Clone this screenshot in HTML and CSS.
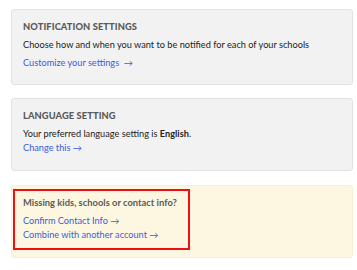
FILE: index.html
```html
<!DOCTYPE html>
<html lang="en">
<head>
    <meta charset="UTF-8">
    <meta name="viewport" content="width=device-width, initial-scale=1.0">
    <title>Settings</title>
    <link rel="stylesheet" href="styles.css">
</head>
<body>

    <div class="panel">
        <h2 class="panel-title">Notification Settings</h2>
        <p class="panel-text">Choose how and when you want to be notified for each of your schools</p>
        <a class="link" href="#">Customize your settings &nbsp;&rarr;</a>
    </div>

    <div class="panel panel-lang">
        <h2 class="panel-title">Language Setting</h2>
        <p class="panel-text">Your preferred language setting is <b>English</b>.</p>
        <a class="link link-tight" href="#">Change this &rarr;</a>
    </div>

    <div class="panel panel-notice">
        <div class="notice-box">
            <h3 class="notice-title">Missing kids, schools or contact info?</h3>
            <a class="link" href="#">Confirm Contact Info &rarr;</a>
            <a class="link link-tight" href="#">Combine with another account &rarr;</a>
        </div>
    </div>

</body>
</html>
```

FILE: styles.css
```css
body {
    font-family: Lato, "Open Sans", Arial, sans-serif;
    margin: 0;
    padding: 9px 4px 0 11px;
    color: #222;
    background-color: #fff;
}

.panel {
    background-color: #f2f2f2;
    border: 1px solid #e2e2e2;
    border-radius: 3px;
    padding: 10px 11px 0 11px;
    height: 76px;
    box-sizing: border-box;
    margin-bottom: 13px;
}

.panel-lang {
    height: 73px;
    margin-bottom: 14px;
}

.panel-title {
    margin: 0;
    font-size: 9.3px;
    font-weight: 900;
    color: #5a5a5a;
    text-transform: uppercase;
    line-height: 14px;
    letter-spacing: 0.1px;
}

.panel-text {
    margin: 4px 0 0 0;
    font-size: 9.2px;
    line-height: 14px;
}

.link {
    display: block;
    margin-top: 4px;
    font-size: 9.2px;
    line-height: 14px;
    color: #3a5ddb;
    text-decoration: none;
}

.link-tight {
    margin-top: 0;
}

.panel-notice {
    background-color: #fdf7e1;
    border-color: #f7efd4;
    padding: 3px 1px;
    height: 73px;
}

.notice-box {
    display: inline-block;
    border: 2px solid #f01010;
    padding: 5px 8px 6px 8px;
    width: 177px;
    height: 61px;
    box-sizing: border-box;
}

.notice-title {
    margin: 0;
    font-size: 9.4px;
    font-weight: bold;
    color: #5a5a5a;
    line-height: 14px;
    white-space: nowrap;
}

.notice-box .link {
    margin-top: 4px;
}

.notice-box .link-tight {
    margin-top: 0;
}
```
